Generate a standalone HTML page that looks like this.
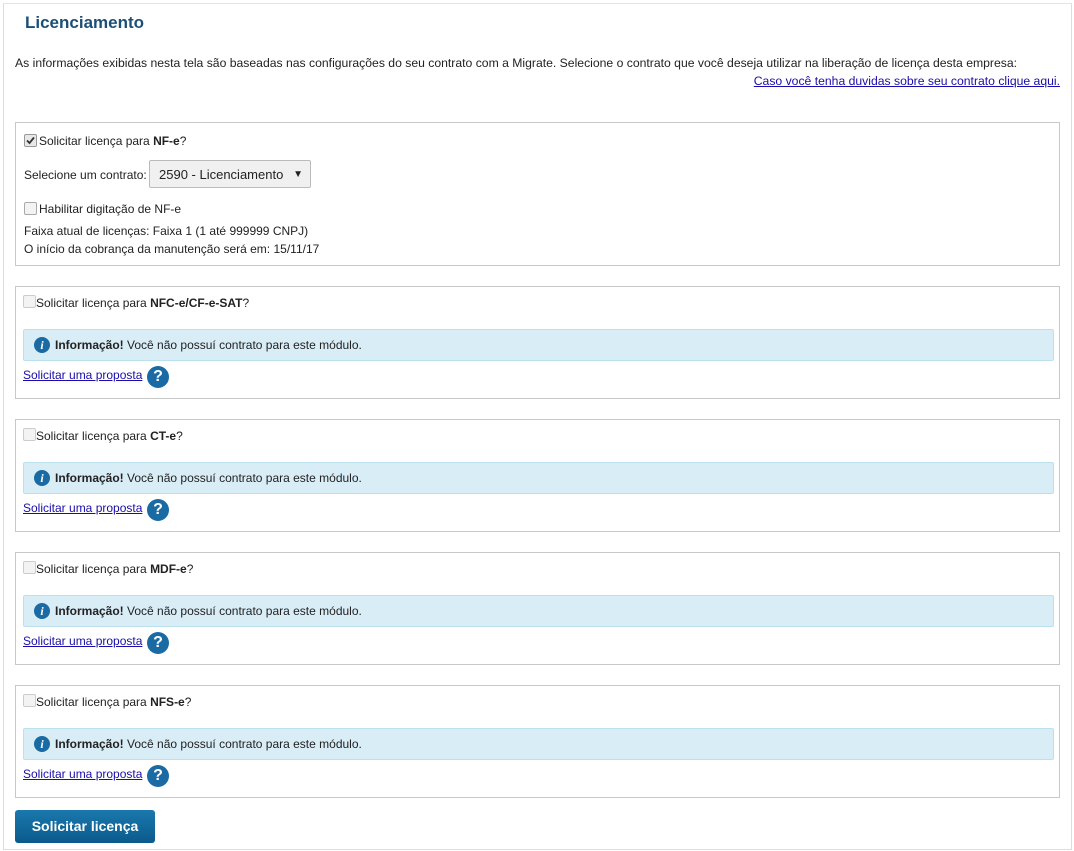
<!DOCTYPE html>
<html><head><meta charset="utf-8"><style>
body{margin:0;width:1074px;height:851px;background:#fff;font-family:"Liberation Sans",Arial,sans-serif;font-size:12px;color:#222;position:relative;overflow:hidden}
.frame{position:absolute;left:3px;top:3px;width:1067px;height:845px;border:1px solid #ddd;border-top-color:#e4e4e4}
.abs{position:absolute;white-space:nowrap}
h1{position:absolute;left:25px;top:13px;margin:0;font-size:17px;font-weight:bold;color:#1b4f78}
a{color:#1a0dab;text-decoration:underline}
.panel{position:absolute;left:15px;width:1043px;border:1px solid #c8c8c8}
.cb{position:absolute;width:11px;height:11px;border:1px solid #aaa;border-radius:2px;background:#f3f3f3}
.info{position:absolute;left:7px;width:1029px;height:30px;background:#d9edf7;border:1px solid #bce0ee;border-radius:2px}
.ic{position:absolute;border-radius:50%;background:#1a6aa3;color:#fff;font-weight:bold;text-align:center}
.btn{position:absolute;left:15px;top:810px;width:140px;height:33px;background:linear-gradient(#1a78ad,#0b5a8c);border-radius:3px;color:#fff;font-weight:bold;font-size:14px;line-height:33px;text-align:center}
.intro{font-size:12.2px}
</style></head><body>
<div class="frame"></div>
<h1>Licenciamento</h1>
<div class="abs intro" style="left:15px;top:56px">As informações exibidas nesta tela são baseadas nas configurações do seu contrato com a Migrate. Selecione o contrato que você deseja utilizar na liberação de licença desta empresa:</div>
<div class="abs intro" style="right:14px;top:74px"><a>Caso você tenha duvidas sobre seu contrato clique aqui.</a></div>

<div class="panel" style="top:122px;height:142px">
  <div class="cb" style="left:8px;top:11px;background:#e8e8e8;border-color:#999"><svg width="11" height="11" style="position:absolute;left:0;top:0"><path d="M2 5.5 L4.5 8 L9 2.5" stroke="#333" stroke-width="1.8" fill="none"/></svg></div>
  <div class="abs" style="left:23px;top:11px">Solicitar licença para <b>NF-e</b>?</div>
  <div class="abs" style="left:8px;top:45px">Selecione um contrato:</div>
  <div class="abs" style="left:133px;top:37px;height:28px;border:1px solid #bbb;border-radius:2px;background:#f0f0f0;font-size:13px;line-height:28px;padding-left:9px;box-sizing:border-box;width:162px">2590 - Licenciamento<span style="position:absolute;right:7px;font-size:10px">▼</span></div>
  <div class="cb" style="left:8px;top:79px"></div>
  <div class="abs" style="left:23px;top:79px">Habilitar digitação de NF-e</div>
  <div class="abs" style="left:8px;top:101px">Faixa atual de licenças: Faixa 1 (1 até 999999 CNPJ)</div>
  <div class="abs" style="left:8px;top:119px">O início da cobrança da manutenção será em: 15/11/17</div>
</div>

<div class="panel" style="top:286px;height:111px">
  <div class="cb" style="left:7px;top:8px;border-color:#ccc"></div>
  <div class="abs" style="left:20px;top:9px">Solicitar licença para <b>NFC-e/CF-e-SAT</b>?</div>
  <div class="info" style="top:42px"><div class="ic" style="left:10px;top:7px;width:16px;height:16px;font-size:12px;line-height:16px;font-style:italic;font-family:'Liberation Serif',serif">i</div><div class="abs" style="left:31px;top:8px"><b>Informação!</b> Você não possuí contrato para este módulo.</div></div>
  <div class="abs" style="left:7px;top:81px"><a>Solicitar uma proposta</a></div>
  <div class="ic" style="left:131px;top:79px;width:22px;height:22px;font-size:16px;line-height:22px">?</div>
</div>
<div class="panel" style="top:419px;height:111px">
  <div class="cb" style="left:7px;top:8px;border-color:#ccc"></div>
  <div class="abs" style="left:20px;top:9px">Solicitar licença para <b>CT-e</b>?</div>
  <div class="info" style="top:42px"><div class="ic" style="left:10px;top:7px;width:16px;height:16px;font-size:12px;line-height:16px;font-style:italic;font-family:'Liberation Serif',serif">i</div><div class="abs" style="left:31px;top:8px"><b>Informação!</b> Você não possuí contrato para este módulo.</div></div>
  <div class="abs" style="left:7px;top:81px"><a>Solicitar uma proposta</a></div>
  <div class="ic" style="left:131px;top:79px;width:22px;height:22px;font-size:16px;line-height:22px">?</div>
</div>
<div class="panel" style="top:552px;height:111px">
  <div class="cb" style="left:7px;top:8px;border-color:#ccc"></div>
  <div class="abs" style="left:20px;top:9px">Solicitar licença para <b>MDF-e</b>?</div>
  <div class="info" style="top:42px"><div class="ic" style="left:10px;top:7px;width:16px;height:16px;font-size:12px;line-height:16px;font-style:italic;font-family:'Liberation Serif',serif">i</div><div class="abs" style="left:31px;top:8px"><b>Informação!</b> Você não possuí contrato para este módulo.</div></div>
  <div class="abs" style="left:7px;top:81px"><a>Solicitar uma proposta</a></div>
  <div class="ic" style="left:131px;top:79px;width:22px;height:22px;font-size:16px;line-height:22px">?</div>
</div>
<div class="panel" style="top:685px;height:111px">
  <div class="cb" style="left:7px;top:8px;border-color:#ccc"></div>
  <div class="abs" style="left:20px;top:9px">Solicitar licença para <b>NFS-e</b>?</div>
  <div class="info" style="top:42px"><div class="ic" style="left:10px;top:7px;width:16px;height:16px;font-size:12px;line-height:16px;font-style:italic;font-family:'Liberation Serif',serif">i</div><div class="abs" style="left:31px;top:8px"><b>Informação!</b> Você não possuí contrato para este módulo.</div></div>
  <div class="abs" style="left:7px;top:81px"><a>Solicitar uma proposta</a></div>
  <div class="ic" style="left:131px;top:79px;width:22px;height:22px;font-size:16px;line-height:22px">?</div>
</div>
<div class="btn">Solicitar licença</div>
</body></html>
